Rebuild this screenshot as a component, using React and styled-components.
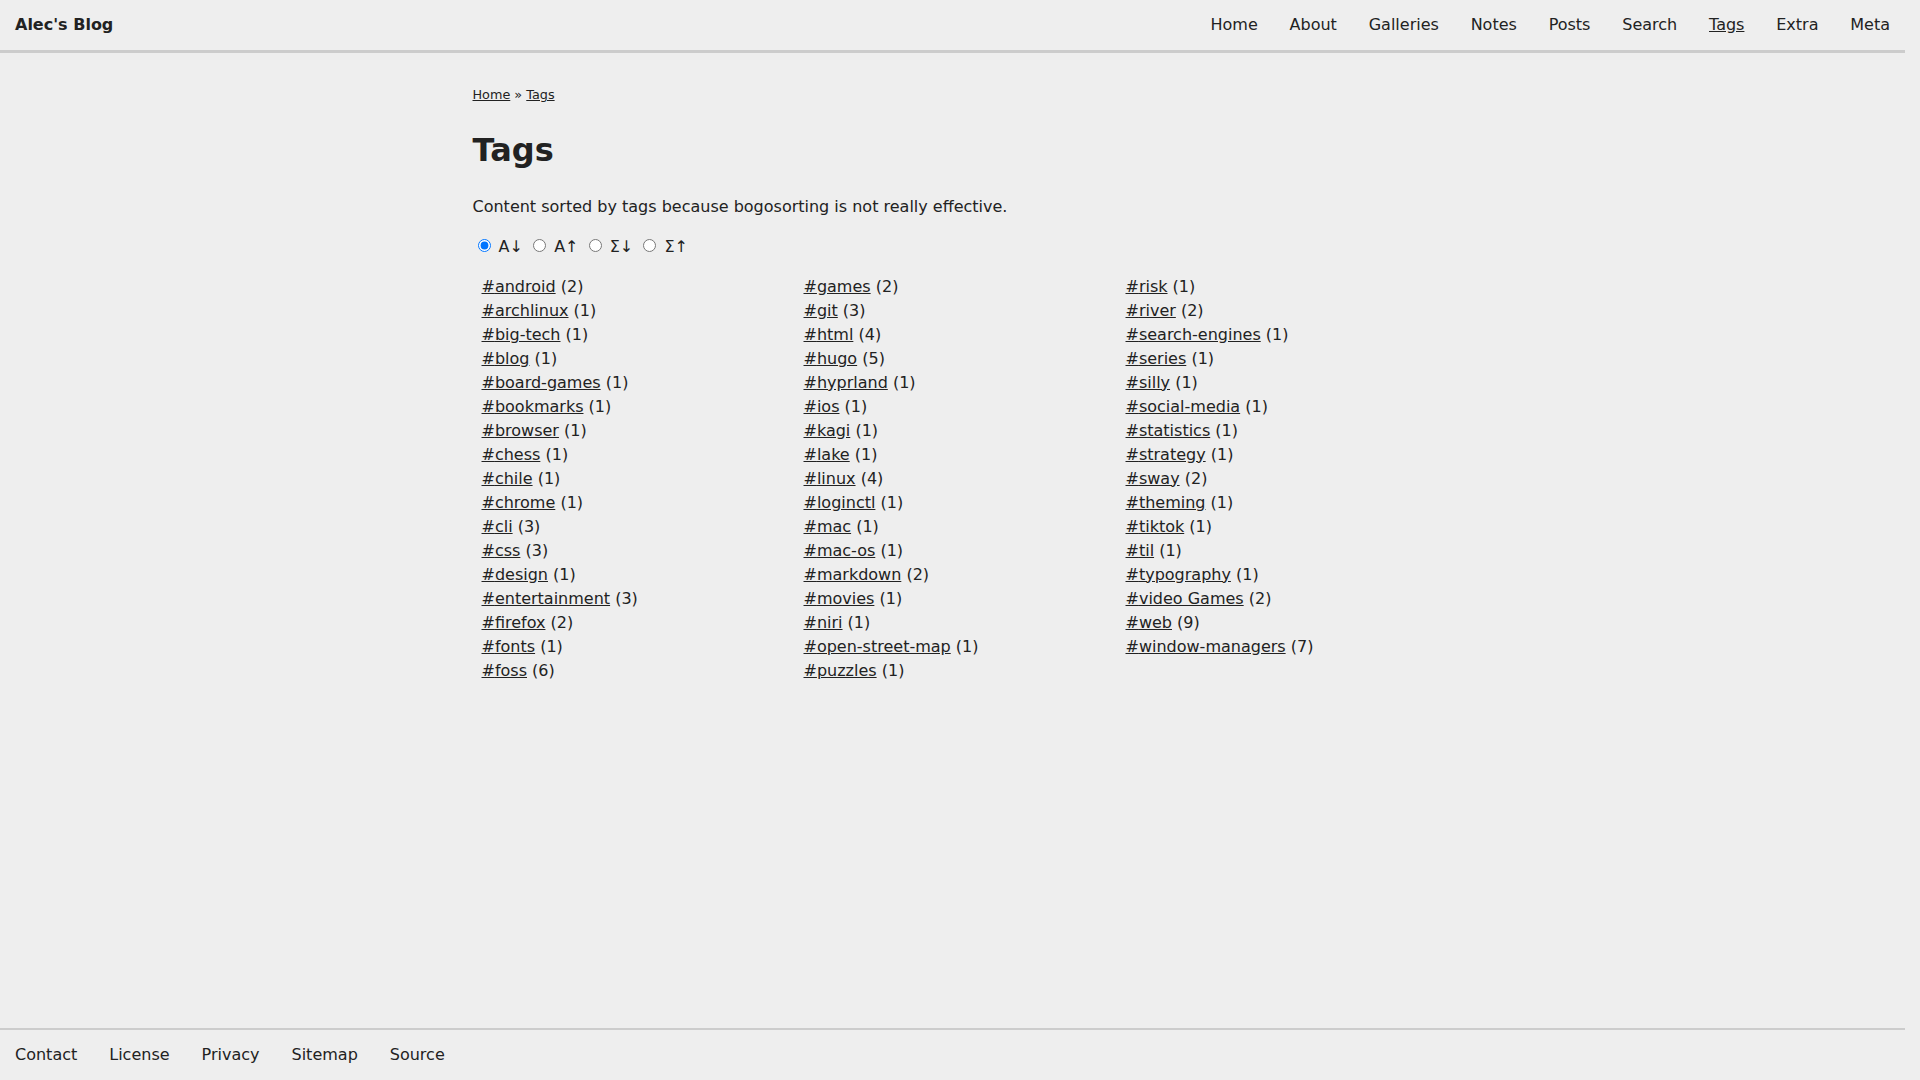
import React, { useState } from "react";
import styled, { createGlobalStyle } from "styled-components";

const GlobalStyle = createGlobalStyle`
  html, body {
    margin: 0;
    padding: 0;
    background-color: #eeeeee;
  }

  body {
    font-family: "DejaVu Sans", sans-serif;
    font-size: 16px;
    line-height: 1.5;
    color: #222222;
  }
`;

// the reference keeps a 15px strip on the right (scrollbar gutter)
const Page = styled.div`
  display: flex;
  flex-direction: column;
  min-height: 100vh;
  width: calc(100% - 15px);
`;

const SiteHeader = styled.header`
  display: flex;
  align-items: center;
  justify-content: space-between;
  padding: 13px 15px;
  border-bottom: 3px solid #cccccc;
`;

const Brand = styled.a`
  font-weight: bold;
  color: #222222;
  text-decoration: none;
`;

const NavList = styled.nav`
  display: flex;
  gap: 31.8px;
`;

const NavLink = styled.a`
  color: #222222;
  text-decoration: ${(props) => (props.$active ? "underline" : "none")};
`;

const Main = styled.main`
  flex: 1;
  width: 960px;
  margin: 0 auto;
  padding-top: 32px;
`;

const Breadcrumb = styled.div`
  font-size: 12.8px;
  line-height: 1.5;

  a {
    color: #222222;
  }
`;

const Title = styled.h1`
  font-size: 32px;
  line-height: 1.2;
  margin: 26.5px 0 0;
`;

const Intro = styled.p`
  margin: 25.7px 0 16px;
`;

const SortRow = styled.div`
  input {
    margin: 3px 3px 0 5px;
  }
`;

const TagList = styled.ul`
  list-style: none;
  margin: 16px 0 0;
  padding: 0 0 0 9px;
  columns: 3;
  column-gap: 15px;
`;

const TagItem = styled.li`
  break-inside: avoid;
`;

const TagLink = styled.a`
  color: #222222;
  text-decoration: underline;
`;

const SiteFooter = styled.footer`
  display: flex;
  gap: 32px;
  padding: 13px 15px;
  border-top: 2px solid #cccccc;
`;

const FooterLink = styled.a`
  color: #222222;
  text-decoration: none;
`;

const navItems = ["Home", "About", "Galleries", "Notes", "Posts", "Search", "Tags", "Extra", "Meta"];
const footerItems = ["Contact", "License", "Privacy", "Sitemap", "Source"];

const tags = [
  ["android", 2], ["archlinux", 1], ["big-tech", 1], ["blog", 1], ["board-games", 1],
  ["bookmarks", 1], ["browser", 1], ["chess", 1], ["chile", 1], ["chrome", 1],
  ["cli", 3], ["css", 3], ["design", 1], ["entertainment", 3], ["firefox", 2],
  ["fonts", 1], ["foss", 6], ["games", 2], ["git", 3], ["html", 4],
  ["hugo", 5], ["hyprland", 1], ["ios", 1], ["kagi", 1], ["lake", 1],
  ["linux", 4], ["loginctl", 1], ["mac", 1], ["mac-os", 1], ["markdown", 2],
  ["movies", 1], ["niri", 1], ["open-street-map", 1], ["puzzles", 1], ["risk", 1],
  ["river", 2], ["search-engines", 1], ["series", 1], ["silly", 1], ["social-media", 1],
  ["statistics", 1], ["strategy", 1], ["sway", 2], ["theming", 1], ["tiktok", 1],
  ["til", 1], ["typography", 1], ["video Games", 2], ["web", 9], ["window-managers", 7],
];

const sorts = [
  { id: "alpha-asc", label: "A↓" },
  { id: "alpha-desc", label: "A↑" },
  { id: "count-desc", label: "Σ↓" },
  { id: "count-asc", label: "Σ↑" },
];

const App = () => {
  const [sort, setSort] = useState("alpha-asc");

  return (
    <>
      <GlobalStyle />
      <Page>
        <SiteHeader>
          <Brand href="#">Alec's Blog</Brand>
          <NavList>
            {navItems.map((item) => (
              <NavLink key={item} href="#" $active={item === "Tags"}>
                {item}
              </NavLink>
            ))}
          </NavList>
        </SiteHeader>

        <Main>
          <Breadcrumb>
            <a href="#">Home</a> » <a href="#">Tags</a>
          </Breadcrumb>
          <Title>Tags</Title>
          <Intro>Content sorted by tags because bogosorting is not really effective.</Intro>

          <SortRow>
            {sorts.map((s) => (
              <React.Fragment key={s.id}>
                <input
                  type="radio"
                  name="sort"
                  id={s.id}
                  checked={sort === s.id}
                  onChange={() => setSort(s.id)}
                />{" "}
                <label htmlFor={s.id}>{s.label}</label>{" "}
              </React.Fragment>
            ))}
          </SortRow>

          <TagList>
            {tags.map(([name, count]) => (
              <TagItem key={name}>
                <TagLink href="#">#{name}</TagLink> ({count})
              </TagItem>
            ))}
          </TagList>
        </Main>

        <SiteFooter>
          {footerItems.map((item) => (
            <FooterLink key={item} href="#">
              {item}
            </FooterLink>
          ))}
        </SiteFooter>
      </Page>
    </>
  );
};

export default App;
